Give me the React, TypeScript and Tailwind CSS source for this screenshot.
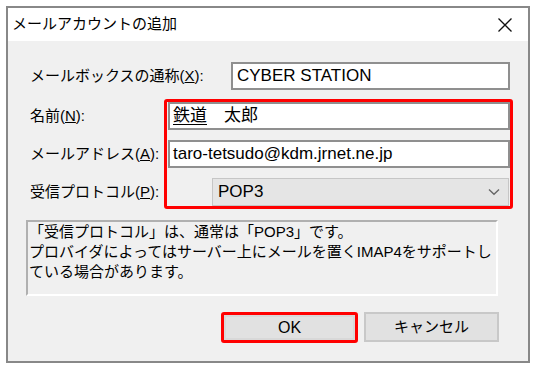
const FONT = "font-[family-name:'Liberation_Sans','Noto_Sans_CJK_JP',sans-serif]";

const Label = ({ text, k }: { text: string; k: string }) => (
  <div className="h-[28px] flex items-center whitespace-nowrap text-[15px] text-black">
    {text}(<u>{k}</u>):
  </div>
);

const CloseIcon = () => (
  <svg width="16" height="16" viewBox="0 0 16 16" fill="none">
    <path d="M1.5 1.5 L14.5 14.5 M14.5 1.5 L1.5 14.5" stroke="#111" strokeWidth="1.3" />
  </svg>
);

const Chevron = () => (
  <svg width="12" height="8" viewBox="0 0 12 8" fill="none">
    <path d="M1 1.5 L6 6.2 L11 1.5" stroke="#666" strokeWidth="1.4" />
  </svg>
);

export default function App() {
  return (
    <div className={`w-[535px] h-[371px] bg-white pt-[6px] pl-[6px] ${FONT}`}>
      <div className="w-[524px] h-[357px] border-2 border-[#888] flex flex-col">
        {/* title bar */}
        <div className="h-[33px] bg-white flex items-center justify-between pl-[4px] pr-[15px]">
          <span className="text-[15px] text-black">メールアカウントの追加</span>
          <CloseIcon />
        </div>

        {/* body */}
        <div className="flex-1 bg-[#f0f0f0] flex flex-col pt-[21px]">
          <div className="flex items-center h-[28px] pl-[22px]">
            <div className="w-[201px]">
              <Label text="メールボックスの通称" k="X" />
            </div>
            <div className="w-[279px] h-[28px] bg-white border-2 border-[#8f8f8f] flex items-center px-[4px] text-[17px] text-black">
              CYBER STATION
            </div>
          </div>

          <div className="flex mt-[9px] pl-[22px]">
            <div className="w-[134px] flex flex-col gap-[10px] pt-[3px]">
              <Label text="名前" k="N" />
              <Label text="メールアドレス" k="A" />
              <Label text="受信プロトコル" k="P" />
            </div>
            <div className="w-[349px] border-[3px] border-[#ff0000] rounded-[3px] pl-[1px] flex flex-col gap-[10px]">
              <div className="h-[28px] bg-white border-2 border-[#8f8f8f] flex items-center px-[3px] text-[17px] text-black">
                <u className="decoration-1 underline-offset-[3px]">鉄道</u>
                <span>　太郎</span>
              </div>
              <div className="h-[28px] bg-white border-2 border-[#8f8f8f] flex items-center px-[3px] text-[17px] text-black">
                taro-tetsudo@kdm.jrnet.ne.jp
              </div>
              <div className="h-[28px] ml-[44px] mr-[1px] bg-[#e5e5e5] border border-[#c6c6c6] flex items-center justify-between pl-[5px] pr-[8px] text-[17px] text-black">
                <span>POP3</span>
                <Chevron />
              </div>
            </div>
          </div>

          <div className="ml-[18px] mt-[11px] w-[472px] h-[76px] border-2 border-t-[#b0b0b0] border-l-[#b0b0b0] border-r-white border-b-white pl-[1px] text-[15px] leading-[20px] text-black">
            <p>「受信プロトコル」は、通常は「POP3」です。</p>
            <p>プロバイダによってはサーバー上にメールを置くIMAP4をサポートし</p>
            <p>ている場合があります。</p>
          </div>

          <div className="flex justify-end gap-[6px] pr-[29px] mt-[16px]">
            <div className="w-[137px] h-[31px] border-[3px] border-[#ff0000] rounded-[3px] bg-[#e1e1e1] flex items-center justify-center">
              <div className="w-full h-full border-2 border-[#d8d8d8] flex items-center justify-center text-[16px] text-black">
                OK
              </div>
            </div>
            <div className="w-[135px] h-[30px] bg-[#e1e1e1] border-2 border-[#c8c8c8] flex items-center justify-center text-[15px] text-black">
              キャンセル
            </div>
          </div>
        </div>
      </div>
    </div>
  );
}
